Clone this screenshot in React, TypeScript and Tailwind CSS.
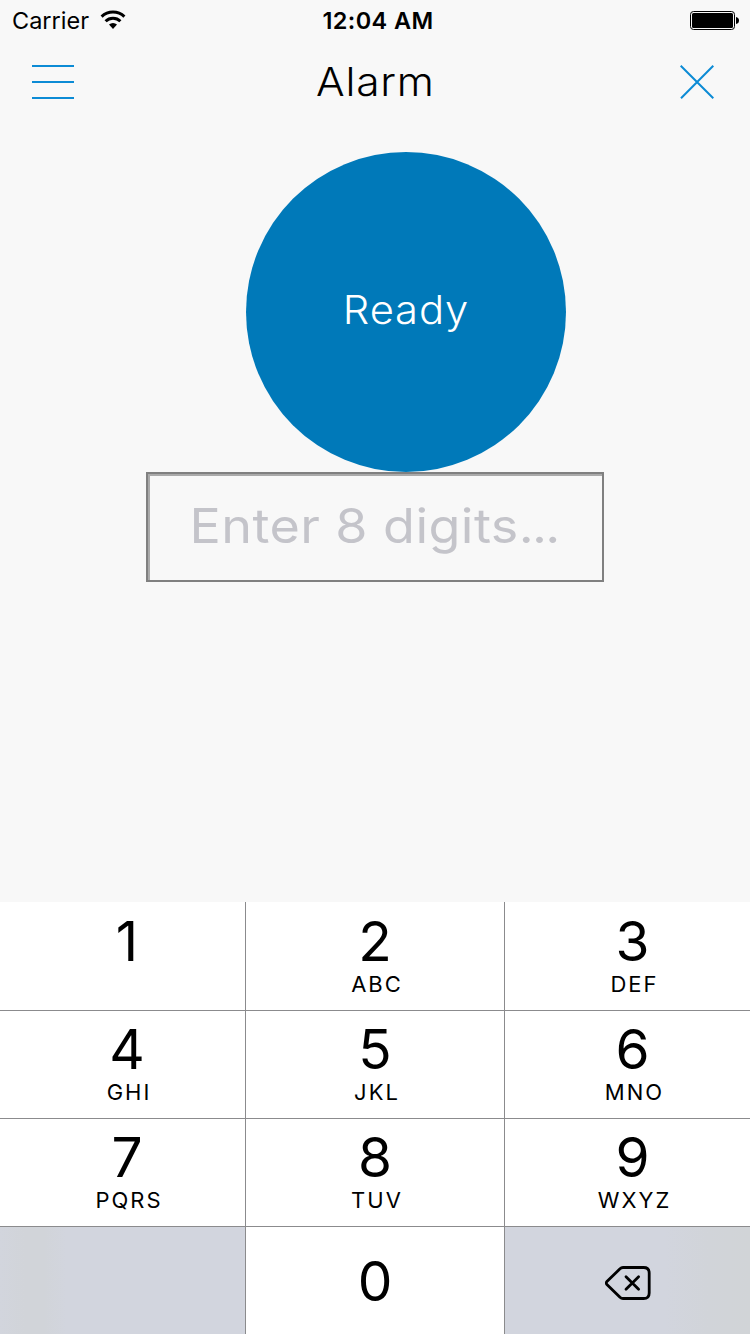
type Key = { digit: string; letters?: string };

const rows: Key[][] = [
  [{ digit: "1" }, { digit: "2", letters: "ABC" }, { digit: "3", letters: "DEF" }],
  [{ digit: "4", letters: "GHI" }, { digit: "5", letters: "JKL" }, { digit: "6", letters: "MNO" }],
  [{ digit: "7", letters: "PQRS" }, { digit: "8", letters: "TUV" }, { digit: "9", letters: "WXYZ" }],
];

const columnStyles = [
  "pl-[9px] border-r border-[#8b8b8d]",
  "pl-0 border-r border-[#8b8b8d]",
  "pl-[10px]",
];

const rowStyles = ["pt-[11px]", "pt-[10px]", "pt-[10px]"];

function StatusBar() {
  return (
    <header className="grid h-10 grid-cols-3 items-center">
      <div className="flex items-center pl-3">
        <span className="pt-[2px] text-[23.5px] leading-[38px]">Carrier</span>
        <svg className="ml-[11px] -mt-[1px]" width="26" height="20" viewBox="0 0 26 20">
          <g fill="none" stroke="black" strokeWidth="3">
            <path d="M1.6 6.6a16.6 16.6 0 0 1 22.8 0" />
            <path d="M5.6 11.2a10.6 10.6 0 0 1 14.8 0" />
          </g>
          <path d="M13 18.9 9 14.6a5.9 5.9 0 0 1 8 0z" />
        </svg>
      </div>
      <div className="pt-[2px] pl-[6px] text-center text-[23.5px] leading-[38px] font-semibold tracking-[0.4px]">12:04 AM</div>
      <div className="flex justify-end pr-[11px]">
        <svg width="50" height="20" viewBox="0 0 50 20">
          <rect x="1.5" y="1.5" width="44" height="18" rx="3" fill="none" stroke="black" />
          <rect x="3" y="3" width="41" height="15" rx="1.5" />
          <path d="M47 7q3 .5 3 3.5t-3 3.5z" />
        </svg>
      </div>
    </header>
  );
}

function NavBar() {
  return (
    <nav className="flex h-[84px] items-center justify-between pr-9 pl-8 text-[#0c8bd5]">
      <button aria-label="Menu" className="flex w-[42px] flex-col gap-[14px]">
        <span className="h-[2px] bg-[#0c8bd5]" />
        <span className="h-[2px] bg-[#0c8bd5]" />
        <span className="h-[2px] bg-[#0c8bd5]" />
      </button>
      <h1 className="-ml-[3px] scale-x-[1.09] pb-px text-[39px] leading-none font-[330] tracking-[0.7px] text-black">
        Alarm
      </h1>
      <button aria-label="Close" className="pb-px">
        <svg width="34" height="34" viewBox="0 0 34 34" fill="none" stroke="currentColor" strokeWidth="2">
          <path d="M.7.7l32.6 32.6M33.3.7 1 33.3" />
        </svg>
      </button>
    </nav>
  );
}

function Keypad() {
  return (
    <section className="mt-auto grid grid-cols-[246px_259px_245px] grid-rows-[109px_108px_108px_107px] bg-white">
      {rows.map((row, rowIndex) =>
        row.map((key, column) => (
          <button
            key={key.digit}
            className={`flex flex-col items-center border-b border-b-[#8b8b8d] ${rowStyles[rowIndex]} ${columnStyles[column]}`}
          >
            <span className="text-[55px] leading-[56px]">{key.digit}</span>
            {key.letters && (
              <span className="pl-[4px] text-[22px] leading-[30px] tracking-[2px]">{key.letters}</span>
            )}
          </button>
        )),
      )}
      <div className="border-r border-[#8b8b8d] bg-[linear-gradient(90deg,#d2d5dd_0%,#d1d4d9_10%,#d1d4d9_18%,#d2d5de_27%,#d2d5de_100%)]" />
      <button className="flex justify-center border-r border-[#8b8b8d] pt-[27px]">
        <span className="text-[55px] leading-[54px]">0</span>
      </button>
      <button
        aria-label="Delete"
        className="flex items-center justify-center bg-[linear-gradient(90deg,#d2d5de_0%,#d2d5de_65%,#d1d4d9_83%,#d1d4d7_100%)] pt-[5px] pl-[2px]"
      >
        <svg width="48" height="36" viewBox="0 0 48 36" fill="none" stroke="black" strokeWidth="2.8" strokeLinecap="round" strokeLinejoin="round">
          <path d="M18 2.5H38.6q5.6 0 5.6 5.6v19.8q0 5.6-5.6 5.6H18q-1.7 0-3-1.3L1.9 19.4q-1.4-1.4 0-2.8L15 3.8q1.3-1.3 3-1.3z" />
          <path d="m21 11.7 12.6 12.6m0-12.6L21 24.3" />
        </svg>
      </button>
    </section>
  );
}

export default function App() {
  return (
    <div className="flex h-[1334px] w-[750px] flex-col overflow-hidden bg-[#f8f8f8] font-['Inter',sans-serif] text-black">
      <StatusBar />
      <NavBar />
      <main className="flex flex-col items-center">
        <div className="mt-7 ml-[62px] flex size-[320px] items-center justify-center rounded-full bg-[#0079b9] pb-[4px] text-[39px] font-[350] tracking-[0.8px] text-white">
          <span className="scale-x-[1.07]">Ready</span>
        </div>
        <div className="w-[458px] border-2 border-[#808080]">
          <div className="flex h-[106px] items-center justify-center border-t-2 border-l-2 border-[#aaaaaa] pr-[4px] pb-[4px]">
            <span className="scale-x-[1.085] text-[48px] font-[380] tracking-[0.4px] whitespace-nowrap text-[#c4c4ca]">
              Enter 8 digits<span className="tracking-[-1.6px]">...</span>
            </span>
          </div>
        </div>
      </main>
      <Keypad />
    </div>
  );
}
